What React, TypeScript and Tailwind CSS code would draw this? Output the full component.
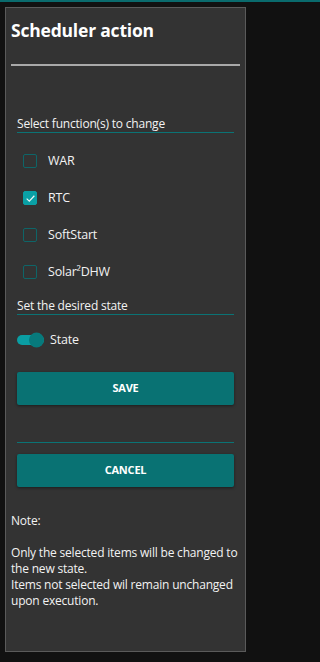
import { useState } from "react";

type Fn = { id: string; label: string };

const FUNCTIONS: Fn[] = [
  { id: "war", label: "WAR" },
  { id: "rtc", label: "RTC" },
  { id: "soft", label: "SoftStart" },
  { id: "solar", label: "Solar²DHW" },
];

function Checkbox({ checked, onClick }: { checked: boolean; onClick: () => void }) {
  return (
    <button
      type="button"
      onClick={onClick}
      className={`flex h-[14px] w-[14px] items-center justify-center rounded-[2px] border-[1.5px] ${
        checked ? "border-[#0aa0a5] bg-[#0aa0a5]" : "border-[#0e6568] bg-transparent"
      }`}
    >
      {checked && (
        <svg viewBox="0 0 12 12" className="h-[11px] w-[11px]" fill="none">
          <path d="M1.8 6.2 L4.7 9 L10.2 3" stroke="#eaf7f7" strokeWidth="1.3" />
        </svg>
      )}
    </button>
  );
}

export default function App() {
  const [selected, setSelected] = useState<Set<string>>(new Set(["rtc"]));
  const [state, setState] = useState(true);

  function toggle(id: string) {
    setSelected((prev) => {
      const next = new Set(prev);
      if (next.has(id)) next.delete(id);
      else next.add(id);
      return next;
    });
  }

  return (
    <div
      className="h-[662px] w-full bg-[#111111] text-[#f2f2f2]"
      style={{ fontFamily: '"Open Sans", "Noto Sans", sans-serif' }}
    >
      <div className="h-[2px] bg-[#0a6b6d]" />
      <div className="ml-[5px] mt-[5px] h-[645px] w-[241px] border border-[#5a5a5a] bg-[#333333]">
        <div className="px-[5px]">
          <h1 className="mt-[10px] text-[17.5px] font-bold leading-[24px] tracking-[-0.2px] text-white">
            Scheduler action
          </h1>
          <div className="mt-[22px] h-[2px] bg-[#a9a9a9]" />
        </div>

        <div className="px-[11px]">
          <div className="mt-[50px] border-b border-[#0b7375] pb-[1px] text-[12px] leading-[15px] tracking-[-0.2px]">
            Select function(s) to change
          </div>

          <div className="mt-[21px] flex flex-col gap-[23px] pl-[6px]">
            {FUNCTIONS.map((f) => (
              <label key={f.id} className="flex h-[14px] items-center gap-[11px] text-[12.5px] tracking-[-0.2px]">
                <Checkbox checked={selected.has(f.id)} onClick={() => toggle(f.id)} />
                <span>{f.label}</span>
              </label>
            ))}
          </div>

          <div className="mt-[19px] border-b border-[#0b7375] pb-[1px] text-[12px] leading-[15px] tracking-[-0.2px]">
            Set the desired state
          </div>

          <div className="mt-[16px] flex items-center gap-[6px]">
            <button
              type="button"
              onClick={() => setState(!state)}
              className={`relative h-[10px] w-[27px] rounded-full ${state ? "bg-[#0a9ea3]" : "bg-[#777]"}`}
            >
              <span
                className={`absolute top-1/2 h-[15px] w-[15px] -translate-y-1/2 rounded-full ${
                  state ? "right-0 bg-[#077a7c]" : "left-0 bg-[#ccc]"
                }`}
              />
            </button>
            <span className="text-[12.5px] tracking-[-0.2px]">State</span>
          </div>

          <button
            type="button"
            className="mt-[22px] h-[33px] w-full rounded-[2px] bg-[#097273] text-[11px] font-bold tracking-[-0.2px] text-white shadow-[0_1px_3px_rgba(0,0,0,0.45)]"
          >
            SAVE
          </button>

          <div className="mt-[37px] h-px bg-[#0b7375]" />

          <button
            type="button"
            className="mt-[11px] h-[33px] w-full rounded-[2px] bg-[#097273] text-[11px] font-bold tracking-[-0.2px] text-white shadow-[0_1px_3px_rgba(0,0,0,0.45)]"
          >
            CANCEL
          </button>
        </div>

        <div className="mt-[26px] px-[5px] text-[12px] leading-[16px] tracking-[-0.2px]">
          <p>Note:</p>
          <p className="mt-[16px]">Only the selected items will be changed to the new state.</p>
          <p>Items not selected wil remain unchanged upon execution.</p>
        </div>
      </div>
    </div>
  );
}
